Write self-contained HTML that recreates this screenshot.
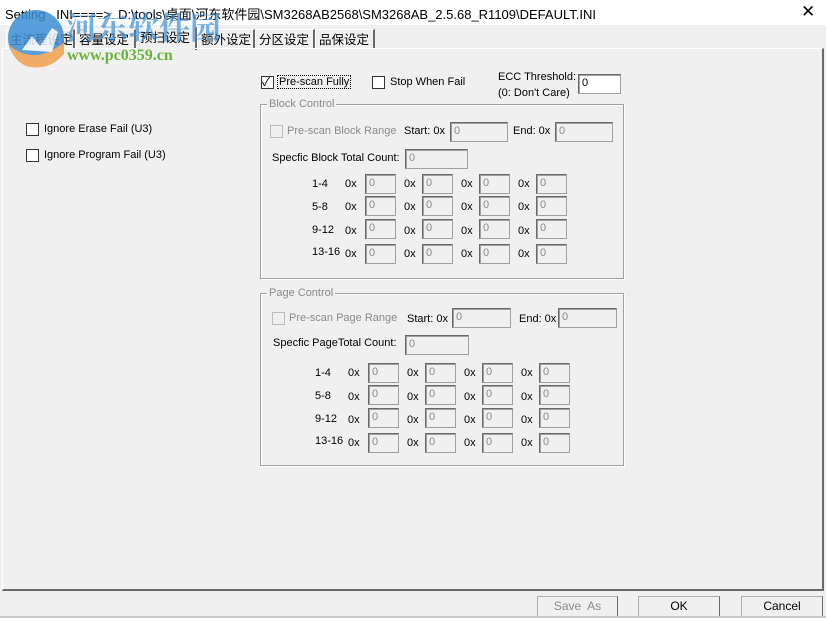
<!DOCTYPE html>
<html><head><meta charset="utf-8"><style>
*{margin:0;padding:0;box-sizing:border-box}
body{width:826px;height:618px;background:#f0f0f0;position:relative;overflow:hidden;font-family:"Liberation Sans","Noto Sans CJK SC",sans-serif;font-size:11px;color:#000}
.a{position:absolute;white-space:nowrap}
.in{position:absolute;height:20px;background:#f0f0f0;border:1px solid #a0a0a0;border-top-color:#696969;border-left-color:#696969;box-shadow:inset 1px 1px 0 #a0a0a0;color:#8a8a8a;padding:2px 0 0 3px;font-size:11px}
.cb{position:absolute;width:13px;height:13px;border:1px solid #333;background:#fff}
.cbd{border-color:#bcbcbc;background:#f0f0f0}
.gb{position:absolute;border:1px solid #a0a0a0;box-shadow:1px 1px 0 #fff inset,1px 1px 0 #fff}
.gl{position:absolute;top:-7px;left:6px;background:#f0f0f0;color:#8a8a8a;padding:0 2px}
.tab{position:absolute;top:29px;height:20px;border:1px solid #fff;border-right:2px solid #696969;border-bottom:none;font-size:12.5px;line-height:17px;padding:0 2px 0 3px;background:#f0f0f0;white-space:nowrap;overflow:hidden;font-family:"Noto Sans CJK SC",sans-serif}
.btn{position:absolute;top:596px;height:21px;border:1px solid #adadad;border-right-color:#696969;border-bottom-color:#696969;background:#f0f0f0;text-align:center;font-size:12px;line-height:19px}
.ox{position:absolute;white-space:nowrap}
</style></head><body>
<div class="a" style="left:0;top:0;width:826px;height:25px;background:#fff"></div>
<div class="a" style="left:5px;top:4px;font-size:13px">Setting&nbsp;&nbsp; INI====&gt;&nbsp; D:\tools\桌面\河东软件园\SM3268AB2568\SM3268AB_2.5.68_R1109\DEFAULT.INI</div>
<div class="a" style="left:801px;top:2px;font-size:17px;font-weight:300">✕</div>

<div class="tab" style="left:6px;width:69px">主流程设定</div>
<div class="tab" style="left:75px;width:61px">容量设定</div>
<div class="tab" style="left:136px;top:27px;height:23px;width:61px;border-bottom:none">预扫设定</div>
<div class="tab" style="left:197px;width:58px">额外设定</div>
<div class="tab" style="left:255px;width:60px">分区设定</div>
<div class="tab" style="left:315px;width:60px">品保设定</div>

<div class="a" style="left:2px;top:48px;width:822px;height:543px;border-top:1px solid #fff;border-left:1px solid #fff;border-right:2px solid #696969;border-bottom:2px solid #696969"></div>
<div class="a" style="left:137px;top:47px;width:58px;height:3px;background:#f0f0f0"></div>

<!-- watermark -->
<svg class="a" style="left:8px;top:6px;opacity:.85" width="60" height="62"><circle cx="28" cy="32" r="28" fill="#3d8fd6"/><path d="M2 40 Q28 60 56 36 L56 48 Q40 66 18 60 Q5 54 2 40Z" fill="#f0a050"/><path d="M14 44 L24 30 L32 40 L44 22 L50 26 L44 46Z" fill="#fff" opacity=".9"/></svg>
<div class="a" style="left:66px;top:3px;font-size:31px;font-weight:bold;color:#3d8fd6;opacity:.7;font-family:'Noto Serif CJK SC',serif">河东软件园</div>
<div class="a" style="left:67px;top:47px;font-size:16px;font-weight:bold;color:#6bb23a;font-family:'Liberation Serif',serif">www.pc0359.cn</div>

<div class="cb" style="left:261px;top:76px"></div><div class="a" style="left:262px;top:73px;font-size:12px">✓</div>
<div class="a" style="left:277px;top:75px;border:1px dotted #000;padding:0 1px">Pre-scan Fully</div>
<div class="cb" style="left:372px;top:76px"></div><div class="a" style="left:390px;top:76px">Stop When Fail</div>
<div class="a" style="left:498px;top:71px">ECC Threshold:</div>
<div class="a" style="left:498px;top:87px">(0: Don't Care)</div>
<div class="in" style="left:578px;top:74px;width:43px;background:#fff;color:#000">0</div>

<div class="cb" style="left:26px;top:123px"></div><div class="a" style="left:44px;top:123px">Ignore Erase Fail (U3)</div>
<div class="cb" style="left:26px;top:149px"></div><div class="a" style="left:44px;top:149px">Ignore Program Fail (U3)</div>

<!-- Block control -->
<div class="gb" style="left:260px;top:104px;width:364px;height:175px"><span class="gl">Block Control</span></div>
<div class="cb cbd" style="left:270px;top:125px"></div><div class="a" style="left:287px;top:125px;color:#8a8a8a">Pre-scan Block Range</div>
<div class="a" style="left:404px;top:125px">Start: 0x</div><div class="in" style="left:450px;top:122px;width:58px">0</div>
<div class="a" style="left:513px;top:125px">End: 0x</div><div class="in" style="left:555px;top:122px;width:58px">0</div>
<div class="a" style="left:272px;top:152px">Specfic Block Total Count:</div><div class="in" style="left:405px;top:149px;width:63px">0</div>
<div class="a" style="left:312px;top:178px">1-4</div><div class="a" style="left:312px;top:201px">5-8</div><div class="a" style="left:312px;top:224px">9-12</div><div class="a" style="left:312px;top:246px">13-16</div>
<div class="ox" style="left:345px;top:178px">0x</div><div class="ox" style="left:404px;top:178px">0x</div><div class="ox" style="left:461px;top:178px">0x</div><div class="ox" style="left:518px;top:178px">0x</div>
<div class="ox" style="left:345px;top:201px">0x</div><div class="ox" style="left:404px;top:201px">0x</div><div class="ox" style="left:461px;top:201px">0x</div><div class="ox" style="left:518px;top:201px">0x</div>
<div class="ox" style="left:345px;top:225px">0x</div><div class="ox" style="left:404px;top:225px">0x</div><div class="ox" style="left:461px;top:225px">0x</div><div class="ox" style="left:518px;top:225px">0x</div>
<div class="ox" style="left:345px;top:248px">0x</div><div class="ox" style="left:404px;top:248px">0x</div><div class="ox" style="left:461px;top:248px">0x</div><div class="ox" style="left:518px;top:248px">0x</div>
<div class="in" style="left:365px;top:174px;width:31px">0</div><div class="in" style="left:422px;top:174px;width:31px">0</div><div class="in" style="left:479px;top:174px;width:31px">0</div><div class="in" style="left:536px;top:174px;width:31px">0</div>
<div class="in" style="left:365px;top:196px;width:31px">0</div><div class="in" style="left:422px;top:196px;width:31px">0</div><div class="in" style="left:479px;top:196px;width:31px">0</div><div class="in" style="left:536px;top:196px;width:31px">0</div>
<div class="in" style="left:365px;top:219px;width:31px">0</div><div class="in" style="left:422px;top:219px;width:31px">0</div><div class="in" style="left:479px;top:219px;width:31px">0</div><div class="in" style="left:536px;top:219px;width:31px">0</div>
<div class="in" style="left:365px;top:244px;width:31px">0</div><div class="in" style="left:422px;top:244px;width:31px">0</div><div class="in" style="left:479px;top:244px;width:31px">0</div><div class="in" style="left:536px;top:244px;width:31px">0</div>

<!-- Page control -->
<div class="gb" style="left:260px;top:293px;width:364px;height:173px"><span class="gl">Page Control</span></div>
<div class="cb cbd" style="left:272px;top:312px"></div><div class="a" style="left:289px;top:312px;color:#8a8a8a">Pre-scan Page Range</div>
<div class="a" style="left:407px;top:313px">Start: 0x</div><div class="in" style="left:452px;top:308px;width:59px">0</div>
<div class="a" style="left:519px;top:313px">End: 0x</div><div class="in" style="left:558px;top:308px;width:59px">0</div>
<div class="a" style="left:273px;top:337px">Specfic PageTotal Count:</div><div class="in" style="left:405px;top:335px;width:64px">0</div>
<div class="a" style="left:315px;top:367px">1-4</div><div class="a" style="left:315px;top:390px">5-8</div><div class="a" style="left:315px;top:413px">9-12</div><div class="a" style="left:315px;top:435px">13-16</div>
<div class="ox" style="left:348px;top:367px">0x</div><div class="ox" style="left:407px;top:367px">0x</div><div class="ox" style="left:464px;top:367px">0x</div><div class="ox" style="left:521px;top:367px">0x</div>
<div class="ox" style="left:348px;top:391px">0x</div><div class="ox" style="left:407px;top:391px">0x</div><div class="ox" style="left:464px;top:391px">0x</div><div class="ox" style="left:521px;top:391px">0x</div>
<div class="ox" style="left:348px;top:414px">0x</div><div class="ox" style="left:407px;top:414px">0x</div><div class="ox" style="left:464px;top:414px">0x</div><div class="ox" style="left:521px;top:414px">0x</div>
<div class="ox" style="left:348px;top:437px">0x</div><div class="ox" style="left:407px;top:437px">0x</div><div class="ox" style="left:464px;top:437px">0x</div><div class="ox" style="left:521px;top:437px">0x</div>
<div class="in" style="left:368px;top:363px;width:31px">0</div><div class="in" style="left:425px;top:363px;width:31px">0</div><div class="in" style="left:482px;top:363px;width:31px">0</div><div class="in" style="left:539px;top:363px;width:31px">0</div>
<div class="in" style="left:368px;top:385px;width:31px">0</div><div class="in" style="left:425px;top:385px;width:31px">0</div><div class="in" style="left:482px;top:385px;width:31px">0</div><div class="in" style="left:539px;top:385px;width:31px">0</div>
<div class="in" style="left:368px;top:408px;width:31px">0</div><div class="in" style="left:425px;top:408px;width:31px">0</div><div class="in" style="left:482px;top:408px;width:31px">0</div><div class="in" style="left:539px;top:408px;width:31px">0</div>
<div class="in" style="left:368px;top:433px;width:31px">0</div><div class="in" style="left:425px;top:433px;width:31px">0</div><div class="in" style="left:482px;top:433px;width:31px">0</div><div class="in" style="left:539px;top:433px;width:31px">0</div>

<div class="btn" style="left:537px;width:81px;color:#8a8a8a">Save&nbsp; As</div>
<div class="btn" style="left:638px;width:82px">OK</div>
<div class="btn" style="left:741px;width:82px">Cancel</div>
<div class="a" style="left:0;top:616px;width:826px;height:2px;background:#c8c8c8"></div>
</body></html>
